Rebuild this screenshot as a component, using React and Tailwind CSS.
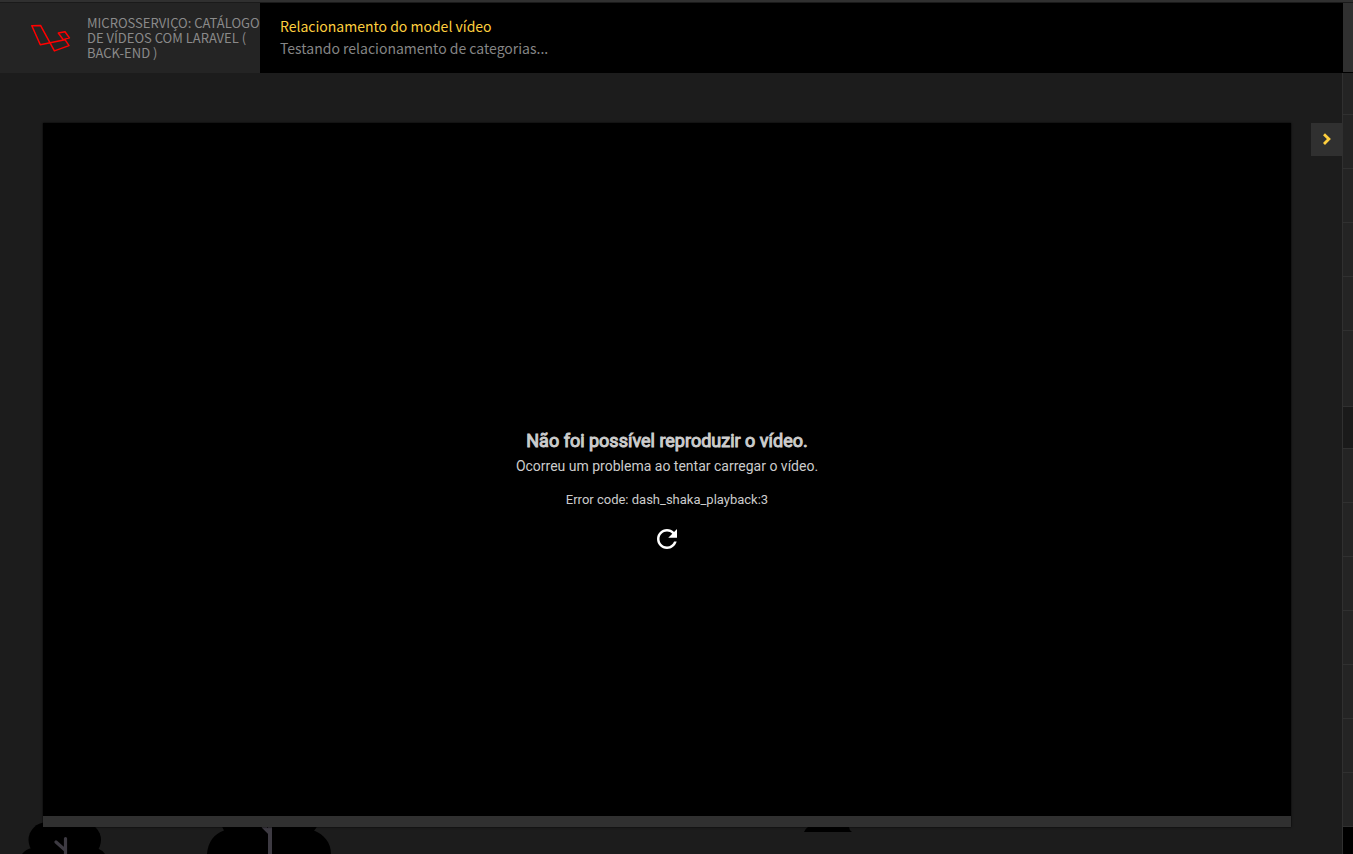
import React from "react";

const lessons = [
  { name: "Aula 1", size: "h-[42px]" },
  { name: "Aula 2", size: "h-[54px]" },
  { name: "Aula 3", size: "h-[54px]" },
  { name: "Aula 4", size: "h-[54px]" },
  { name: "Aula 5", size: "h-[54px]" },
  { name: "Aula 6", size: "h-[76px]" },
  { name: "Módulo", size: "h-[42px] bg-[#1a1a1a]" },
  { name: "Aula 7", size: "h-[54px]" },
  { name: "Aula 8", size: "h-[54px]" },
  { name: "Aula 9", size: "h-[54px]" },
  { name: "Aula 10", size: "h-[54px]" },
  { name: "Aula 11", size: "h-[54px]" },
  { name: "Aula 12", size: "h-[54px]" },
  { name: "Aula 13", size: "h-[54px]" },
];

function LaravelLogo() {
  return (
    <svg className="h-[30px] w-10 shrink-0" viewBox="0 0 40 30" fill="none" stroke="#ff0000" strokeWidth="1.5" strokeLinejoin="round" aria-hidden="true">
      <path d="M.8 3.700 9.500 3.400 23.400 28.900 38 23.600 34 17.700 9.300 22.700Z" />
      <path d="m27.300 11 6.700-1.300 4.400 6.200-6.200 1.700Z" />
    </svg>
  );
}

function Header() {
  return (
    <header className="flex min-h-[70px] bg-black">
      <div className="flex w-[260px] shrink-0 items-center gap-4 bg-[#242424] pb-0.5 pl-[31px]">
        <LaravelLogo />
        <p className="text-[13px] leading-[15px] text-[#8a8a8a] uppercase">
          Microsserviço: Catálogo de vídeos com Laravel ( Back-end )
        </p>
      </div>
      <div className="flex-1 px-5 pt-3 text-[14px] leading-[22px]">
        <h1 className="text-[#fecf3e]">Relacionamento do model vídeo</h1>
        <p className="text-[#858585]">Testando relacionamento de categorias...</p>
      </div>
      <div className="w-[10px] border-b border-black bg-[#303030]" />
    </header>
  );
}

function Player() {
  return (
    <section className="relative min-w-0 flex-1 shadow-[0_0_2px_#000]">
      <div className="flex aspect-[1248/693] flex-col items-center justify-center bg-black pt-[43px] font-[Roboto,sans-serif] text-[#cccccc]">
        <h2 className="text-[18px] leading-[26px] font-normal [-webkit-text-stroke:1px_#cccccc]">Não foi possível reproduzir o vídeo.</h2>
        <p className="text-[14px] leading-[24px]">Ocorreu um problema ao tentar carregar o vídeo.</p>
        <p className="mt-[10px] text-[13px] leading-[24px]">Error code: dash_shaka_playback:3</p>
        <button type="button" aria-label="Recarregar" className="mt-3 text-white">
          <svg className="size-[30px]" viewBox="0 0 24 24" fill="currentColor" aria-hidden="true">
            <path d="M17.65 6.35C16.2 4.9 14.21 4 12 4c-4.42 0-7.99 3.58-7.99 8s3.57 8 7.99 8c3.73 0 6.84-2.55 7.73-6h-2.08c-.82 2.33-3.04 4-5.65 4-3.31 0-6-2.69-6-6s2.69-6 6-6c1.66 0 3.14.69 4.22 1.78L13 11h7V4l-2.35 2.35z" />
          </svg>
        </button>
      </div>
      <div className="h-[11px] bg-[#303030]" />
    </section>
  );
}

function Trees() {
  return (
    <svg className="absolute bottom-0 left-0 h-[36px] w-[860px]" viewBox="0 0 860 36" aria-hidden="true">
      <circle cx="46" cy="22" r="17.500" />
      <circle cx="83.500" cy="22" r="17.500" />
      <path d="M45 2h39v34H45ZM22 36q4-5 10-6h65q5 2 8 6Z" />
      <path d="M56 24 65 32M65.500 20.500v16" fill="none" stroke="#3d3a42" strokeWidth="3.2" strokeLinecap="round" />
      <path d="M207 36c1-12 7-20 17-23.500q-1-2-2-4h95q-1 2-3 4c10 4 17 12 17 23.500Z" />
      <path d="m263 8 7 7M270 7v29" fill="none" stroke="#3d3a42" strokeWidth="4" />
      <path d="M804 14q1-3 4-5h41q0 3 3 5Z" />
    </svg>
  );
}

export default function App() {
  return (
    <div className="flex min-h-screen flex-col overflow-hidden bg-[#1c1c1c] font-['Noto_Sans_CJK_SC',sans-serif]">
      <div className="h-[3px] border-b border-[#1a1a1a] bg-[#303030]" />
      <Header />
      <div className="flex flex-1">
        <main className="relative flex flex-1 items-start gap-5 pt-[50px] pb-[27px] pl-[43px]">
          <Trees />
          <Player />
          <button type="button" aria-label="Mostrar aulas" className="flex h-[33px] w-[31px] items-center justify-center bg-[#303030] text-[#fecf3e]">
            <svg className="h-[13px] w-2" viewBox="0 0 8 13" fill="none" stroke="currentColor" strokeWidth="2.8" aria-hidden="true">
              <path d="m1 1.200 4.900 4.900L1 11" />
            </svg>
          </button>
        </main>
        <aside className="flex w-[11px] flex-col border-l border-[#303030] bg-black">
          {lessons.map((lesson) => (
            <a
              key={lesson.name}
              href="#aula"
              aria-label={lesson.name}
              className={`block shrink-0 border-b border-[#303030] ${lesson.size.includes("bg-") ? "" : "bg-[#242424]"} ${lesson.size}`}
            />
          ))}
        </aside>
      </div>
    </div>
  );
}
